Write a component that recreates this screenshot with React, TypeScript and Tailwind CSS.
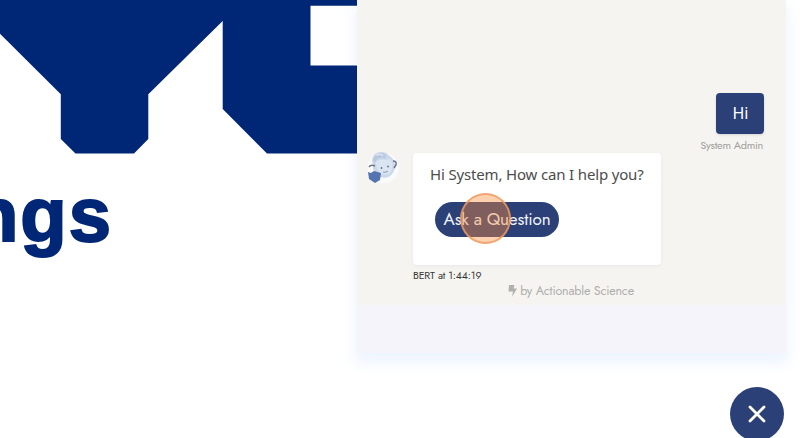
function Brand() {
  return (
    <section className="relative z-10 w-[357px] h-full shrink-0 overflow-hidden">
      <svg className="block" width="357" height="438" viewBox="0 0 357 438">
        <g fill="#002776">
          <path d="M0 0H357V5.8H310.5V65.5H357V153.5H267L222.7 109V21L148.3 94.3V139L134 153.5H75.5L60.8 139V94.3L0 33.8Z" />
          <text
            x="-28"
            y="241"
            fontFamily="'Liberation Sans', Arial, sans-serif"
            fontWeight="700"
            fontSize="76"
            textLength="139"
            stroke="#002776"
            strokeWidth="2"
          >
            ngs
          </text>
        </g>
      </svg>
    </section>
  );
}

function BotAvatar() {
  return (
    <svg className="block shrink-0" width="32" height="34" viewBox="0 0 32 34">
      <circle cx="16" cy="17" r="15.5" fill="#f9fafa" />
      <path d="M6 13C3 7 8 0 15 1C20 1 21 4 24 6C30 11 29 21 23 25C17 29 9 26 6 18Z" fill="#cbd8ea" />
      <path d="M6 8C9 1 17 0 19 5L18 8C13 5 10 8 7 12Z" fill="#b9c8de" />
      <path d="M9 4Q14 2 16 5" fill="none" stroke="#dce6f3" strokeWidth="1.5" />
      <path d="M9 11C13 7 17 10 23 8C27 12 26 20 22 23C15 26 9 20 9 11Z" fill="#dbe5f2" />
      <path d="M2 16Q4 13 8 15M26 10Q30 10 29 14L27 17" fill="none" stroke="#68768c" strokeWidth="1.5" />
      <path d="M1 21L4 22L7 20L14 22L13 29L8 32L2 28Z" fill="#5474b1" />
      <circle cx="14.5" cy="17" r="0.9" fill="#66758d" />
      <circle cx="21" cy="15.5" r="0.9" fill="#66758d" />
      <path d="M16 21Q19 22 21 20" fill="none" stroke="#8796b0" strokeWidth="1" />
    </svg>
  );
}

function BotMessage() {
  return (
    <div className="flex h-[112px] w-[248px] flex-col rounded bg-white pl-[17px] pt-[10px] shadow-[0_1px_4px_rgba(0,0,0,0.05)]">
      <p className="h-[22px] whitespace-nowrap font-['Noto_Sans',sans-serif] text-[15px] leading-[22px] tracking-[-0.16px] text-[#4c4c4c]">
        Hi System, How can I help you?
      </p>
      <button className="relative ml-[5px] mt-[17px] flex h-[35px] w-[124px] items-center justify-center rounded-full bg-[#2b4077] font-['Jost',sans-serif] text-[17px] tracking-[-0.12px] text-[#f1f3fa] whitespace-nowrap">
        Ask a Question
        <span className="absolute left-[25px] top-[-9px] size-[51px] rounded-full border-2 border-[#ee9b61]/80 bg-[#ff8c38]/40" />
      </button>
    </div>
  );
}

function ChatPanel() {
  return (
    <section className="flex h-[353px] w-[429px] shrink-0 flex-col bg-[#f5f4fa] shadow-[0_8px_12px_3px_rgba(228,238,255,0.6)]">
      <div className="flex h-[305px] flex-col bg-[#f5f4f1] pt-[93px]">
        <div className="flex h-[60px] flex-col items-end pr-[22px]">
          <div className="flex h-[41px] w-12 items-center justify-center rounded bg-[#2b4077] pb-0.5 pl-px font-['Noto_Sans',sans-serif] text-[16px] leading-[22px] text-white shadow-sm">
            Hi
          </div>
          <span className="mr-px mt-1 whitespace-nowrap font-['Jost',sans-serif] text-[11px] leading-[14px] tracking-[-0.29px] text-[#a09f9d]">
            System Admin
          </span>
        </div>
        <div className="flex h-[112px] pl-[10px]">
          <div className="-mt-[2px] w-[46px]">
            <BotAvatar />
          </div>
          <BotMessage />
        </div>
        <span className="ml-14 mt-1 h-[14px] whitespace-nowrap font-['Jost',sans-serif] text-[10.5px] leading-[14px] tracking-[-0.13px] text-[#383838]">
          BERT at 1:44:19
        </span>
        <div className="flex h-4 items-center justify-center gap-[3px] pr-[1px] font-['Jost',sans-serif] text-[12.5px] tracking-[-0.19px] text-[#afaeac]">
          <svg width="9" height="14" viewBox="0 0 9 14">
            <path d="M1 1H6.5L5.5 4.5H9L4 13L5 7.5H0.5Z" fill="#b1b0ae" />
          </svg>
          <span className="whitespace-nowrap">by Actionable Science</span>
        </div>
      </div>
    </section>
  );
}

export default function App() {
  return (
    <main className="relative flex h-[438px] w-[800px] overflow-hidden bg-white">
      <Brand />
      <ChatPanel />
      <button className="absolute left-[730px] top-[387px] flex size-[54px] items-center justify-center rounded-full bg-[#2b4077]">
        <svg width="18" height="18" viewBox="0 0 18 18">
          <path d="M2 2L16 16M16 2L2 16" stroke="white" strokeWidth="2.8" strokeLinecap="round" />
        </svg>
      </button>
    </main>
  );
}
